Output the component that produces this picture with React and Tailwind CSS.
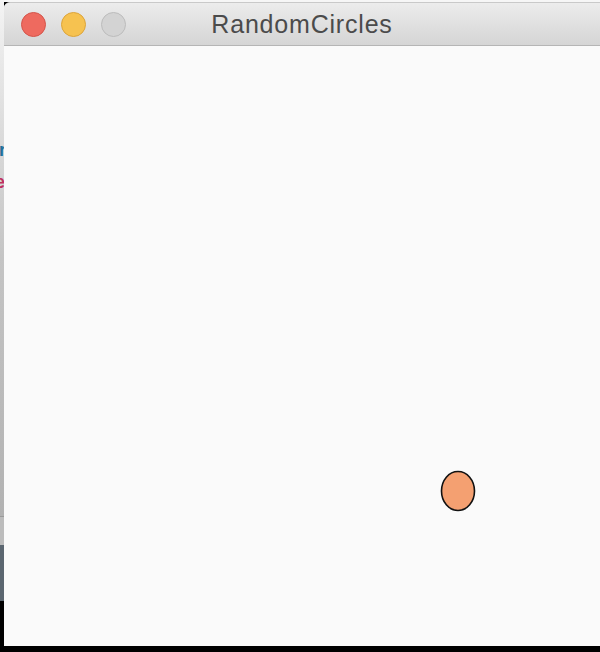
const Light = ({ color, ring }) => (
  <div className={`w-[25px] h-[25px] rounded-full border ${color} ${ring}`} />
);

const App = () => {
  return (
    <div className="flex w-[600px] h-[652px] bg-black overflow-hidden font-['Helvetica_Neue','Liberation_Sans',Arial,sans-serif]">
      {/* sliver of what lies behind the window */}
      <div className="flex flex-col w-[4px] shrink-0">
        <div className="relative h-[516px] bg-gradient-to-b from-[#f4f4f4] via-[#c4c4c4] to-[#b2b2b2] overflow-hidden">
          <span className="absolute left-[-1px] top-[141px] text-[18px] leading-none font-semibold text-[#1f6f9a]">r</span>
          <span className="absolute left-[-5px] top-[173px] text-[18px] leading-none font-semibold text-[#c0305e]">e</span>
        </div>
        <div className="h-[1px] bg-[#9a9a9a]" />
        <div className="h-[28px] bg-[#bcbcbc]" />
        <div className="h-[56px] bg-[#5b6670]" />
        <div className="flex-1 bg-black" />
      </div>

      <div className="flex flex-col flex-1 bg-black">
        <div className="h-[2px] bg-[#f6f6f6]" />
        <div className="flex flex-col h-[644px] rounded-tl-[6px] overflow-hidden bg-[#fafafa] border-t border-[#c9c9c9]">
          <div className="relative flex items-center h-[43px] shrink-0 bg-gradient-to-b from-[#ececec] to-[#d5d5d5] border-b border-[#b5b5b5]">
            <div className="flex items-center gap-[15px] pl-[17px]">
              <Light color="bg-[#ee6a5f]" ring="border-[#d4544a]" />
              <Light color="bg-[#f6c250]" ring="border-[#dca43a]" />
              <Light color="bg-[#d3d3d3]" ring="border-[#bcbcbc]" />
            </div>
            <div className="absolute inset-0 flex items-center justify-center pt-[2px]">
              <span className="text-[25px] text-[#4b4b4b] tracking-[0.8px]">RandomCircles</span>
            </div>
          </div>

          <div className="relative flex-1 bg-[#fafafa]">
            <svg className="absolute left-[436px] top-[424px]" width="38" height="44" viewBox="0 0 38 44">
              <ellipse cx="18" cy="21" rx="16.5" ry="19.5" fill="#f4a071" stroke="#111" strokeWidth="1.6" />
            </svg>
          </div>
        </div>
        <div className="flex-1 bg-black" />
      </div>
    </div>
  );
};

export default App;
